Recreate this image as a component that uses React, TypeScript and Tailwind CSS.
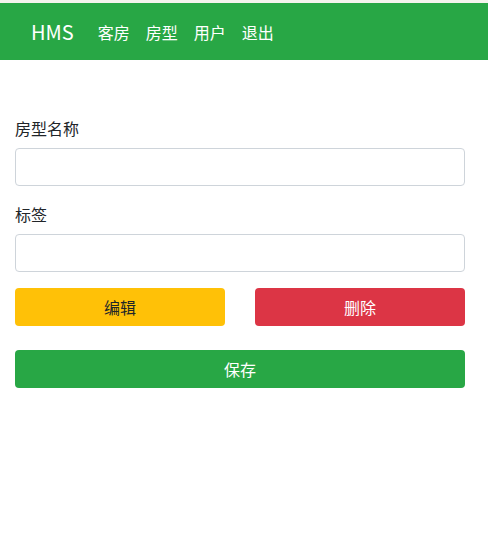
const App = () => {
  return (
    <div className="min-h-[539px] bg-white text-[#212529] [font-family:'Noto_Sans_CJK_SC','Noto_Sans',sans-serif]">
      <div className="h-[3px] bg-[#f4f4ec]" />
      <nav className="flex h-[57px] items-center bg-[#28a745] pl-[31px] text-white">
        <span className="mr-4 text-[20px] leading-[30px]">HMS</span>
        <div className="flex text-[16px]">
          <a className="px-2">客房</a>
          <a className="px-2">房型</a>
          <a className="px-2">用户</a>
          <a className="px-2">退出</a>
        </div>
      </nav>

      <form className="flex w-[480px] flex-col px-[15px] pt-[56px]">
        <label className="mb-2 text-[16px] leading-6">房型名称</label>
        <input className="mb-4 h-[38px] rounded border border-[#ced4da] px-3" />

        <label className="mb-2 text-[16px] leading-6">标签</label>
        <input className="mb-4 h-[38px] rounded border border-[#ced4da] px-3" />

        <div className="mb-6 flex gap-[30px]">
          <button type="button" className="h-[38px] flex-1 rounded bg-[#ffc107] text-[16px] text-[#212529]">
            编辑
          </button>
          <button type="button" className="h-[38px] flex-1 rounded bg-[#dc3545] text-[16px] text-white">
            删除
          </button>
        </div>

        <button type="button" className="h-[38px] rounded bg-[#28a745] text-[16px] text-white">
          保存
        </button>
      </form>
    </div>
  );
};

export default App;
